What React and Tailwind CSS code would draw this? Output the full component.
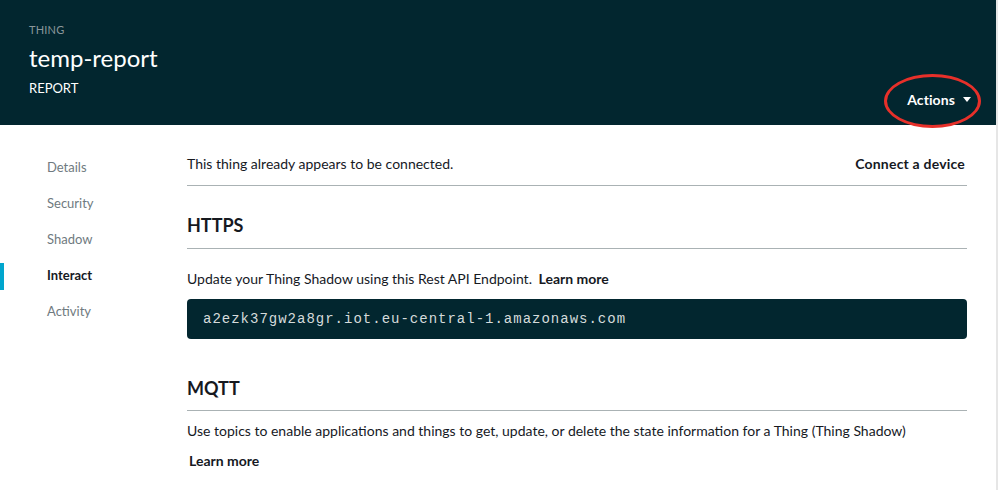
import React from 'react';

const navItems = ['Details', 'Security', 'Shadow', 'Interact', 'Activity'];

function Header() {
  return (
    <div className="relative z-10 h-[125px] bg-[#02262f] pl-[29px] pr-[25px] flex justify-between">
      <div className="pt-[22px]">
        <div className="text-[11px] leading-[16px] text-[#8b979b] tracking-[0.2px]">THING</div>
        <div className="mt-[5px] text-[24px] leading-[30px] text-white">temp-report</div>
        <div className="mt-[6px] text-[13px] leading-[18px] text-white">REPORT</div>
      </div>
      <div className="relative self-end pb-[15px]">
        <button type="button" className="flex items-center gap-[8px] text-[14px] font-bold text-white tracking-[0.1px]">
          Actions
          <span className="w-0 h-0 border-l-[4px] border-r-[4px] border-t-[5px] border-l-transparent border-r-transparent border-t-white" />
        </button>
        <div className="absolute left-[-23px] top-[-15px] w-[97px] h-[54px] rounded-[50%] border-[3px] border-[#e7302a]" />
      </div>
    </div>
  );
}

function Sidebar() {
  return (
    <nav className="w-[187px] shrink-0 pt-[25px]">
      {navItems.map((item) => {
        const active = item === 'Interact';
        return (
          <div key={item} className="relative h-[36px] flex items-center pl-[47px]">
            {active && <span className="absolute left-0 top-[5px] w-[4px] h-[27px] bg-[#00a6ce]" />}
            <span className={active ? 'text-[13px] font-bold text-[#16191f]' : 'text-[13px] text-[#6f7a80]'}>{item}</span>
          </div>
        );
      })}
    </nav>
  );
}

function Main() {
  return (
    <div className="w-[780px] text-[14px] text-[#16191f]">
      <div className="flex justify-between items-center pt-[28px] pb-[11px] border-b border-[#aab2b4]">
        <span>This thing already appears to be connected.</span>
        <span className="font-bold pr-[2px] tracking-[0.2px]">Connect a device</span>
      </div>
      <div className="pt-[27px] pb-[11px] border-b border-[#aab2b4] text-[18px] leading-[24px] font-bold">HTTPS</div>
      <div className="pt-[20px] leading-[20px]">
        Update your Thing Shadow using this Rest API Endpoint. <span className="ml-[3px] font-bold">Learn more</span>
      </div>
      <div className="mt-[10px] h-[40px] rounded-[4px] bg-[#02262f] flex items-center pl-[16px] font-['Liberation_Mono',monospace] text-[14px] tracking-[1px] text-[#d5dbdb]">
        a2ezk37gw2a8gr.iot.eu-central-1.amazonaws.com
      </div>
      <div className="pt-[37px] pb-[10px] border-b border-[#aab2b4] text-[18px] leading-[24px] font-bold">MQTT</div>
      <div className="pt-[10px] leading-[20px]">
        Use topics to enable applications and things to get, update, or delete the state information for a Thing (Thing Shadow)
      </div>
      <div className="pt-[10px] pl-[2px] leading-[20px] font-bold">Learn more</div>
    </div>
  );
}

export default function App() {
  return (
    <div className="flex w-[998px] h-[490px] overflow-hidden bg-white font-['Lato',sans-serif]">
      <div className="flex-1 flex flex-col min-w-0">
        <Header />
        <div className="flex">
          <Sidebar />
          <Main />
        </div>
      </div>
      <div className="w-[2px] bg-[#e6e6e6]" />
    </div>
  );
}
